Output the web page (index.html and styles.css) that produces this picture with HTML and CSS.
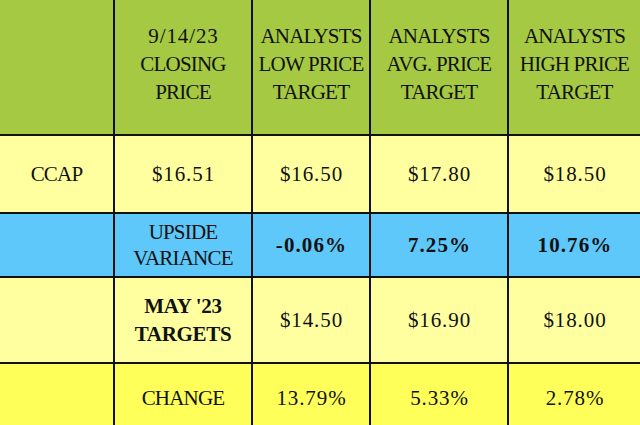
FILE: index.html
```html
<!DOCTYPE html>
<html>
<head>
<meta charset="utf-8">
<link rel="stylesheet" href="styles.css">
</head>
<body>
<div class="grid">
  <div class="c hd"></div>
  <div class="c hd"><div><span class="n">9/14/23</span><br>CLOSING<br>PRICE</div></div>
  <div class="c hd">ANALYSTS<br>LOW PRICE<br>TARGET</div>
  <div class="c hd">ANALYSTS<br>AVG. PRICE<br>TARGET</div>
  <div class="c hd">ANALYSTS<br>HIGH PRICE<br>TARGET</div>

  <div class="c ly">CCAP</div>
  <div class="c ly n">$16.51</div>
  <div class="c ly n">$16.50</div>
  <div class="c ly n">$17.80</div>
  <div class="c ly n">$18.50</div>

  <div class="c bl"></div>
  <div class="c bl">UPSIDE<br>VARIANCE</div>
  <div class="c bl b bn">-0.06%</div>
  <div class="c bl b bn">7.25%</div>
  <div class="c bl b bn">10.76%</div>

  <div class="c ly"></div>
  <div class="c ly b two2">MAY '23<br>TARGETS</div>
  <div class="c ly n">$14.50</div>
  <div class="c ly n">$16.90</div>
  <div class="c ly n">$18.00</div>

  <div class="c yl"></div>
  <div class="c yl">CHANGE</div>
  <div class="c yl n">13.79%</div>
  <div class="c yl n">5.33%</div>
  <div class="c yl n">2.78%</div>
</div>
</body>
</html>
```
FILE: styles.css
```css
html, body {
  margin: 0;
  padding: 0;
  overflow: hidden;
  width: 640px;
  height: 425px;
}
.grid {
  display: grid;
  grid-template-columns: 113px 136px 116px 136px 131px;
  grid-template-rows: 134px 76px 62px 84px 70px;
  gap: 2px;
  background: #111;
  width: 640px;
  font-family: "Liberation Serif", serif;
  font-size: 21px;
  color: #111;
}
.c {
  display: flex;
  align-items: center;
  justify-content: center;
  text-align: center;
  line-height: 26px;
  letter-spacing: -0.8px;
}
.hd {
  background: #a5c942;
  line-height: 28px;
  padding-bottom: 6px;
}
.ly { background: #ffffa0; }
.bl { background: #5ec8fa; }
.yl { background: #ffff5a; padding-bottom: 2px; }
.b { font-weight: bold; }
.n { letter-spacing: 0.9px; padding-left: 1px; }
.bn { letter-spacing: 1.1px; padding-left: 1px; }
.two2 { line-height: 28px; letter-spacing: -0.3px; }
```
